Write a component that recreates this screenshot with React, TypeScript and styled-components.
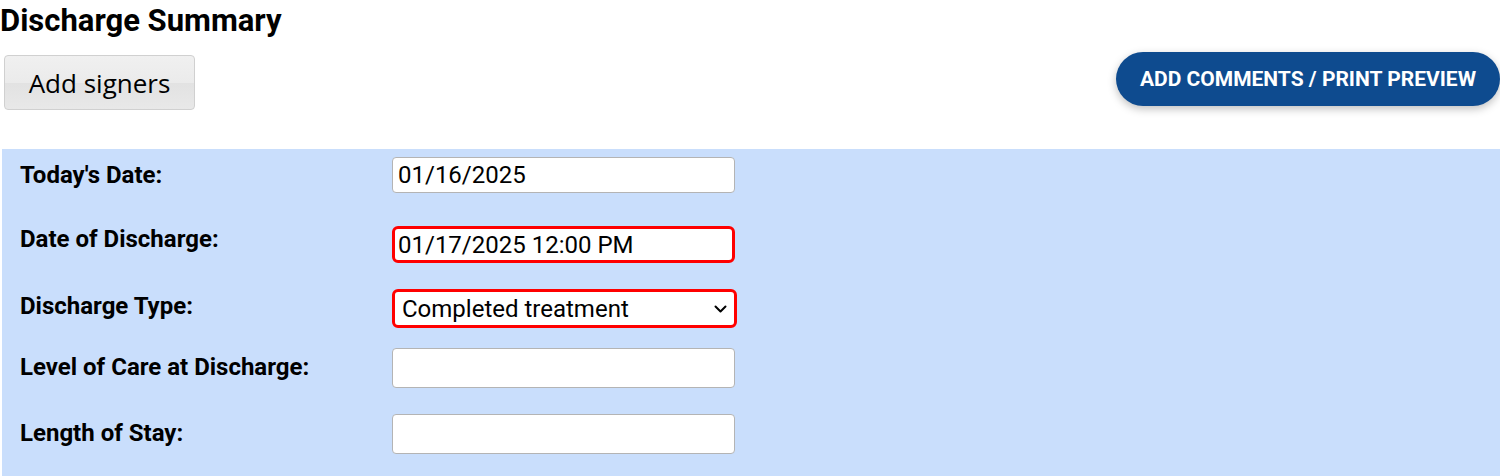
import React from "react";
import styled, { createGlobalStyle } from "styled-components";

const GlobalStyle = createGlobalStyle`
  html, body { margin: 0; padding: 0; background: #ffffff; }
  body { font-family: Roboto, "Liberation Sans", sans-serif; color: #000; }
  * { box-sizing: border-box; }
`;

const Page = styled.div`
  width: 1500px;
  display: flex;
  flex-direction: column;
`;

const Title = styled.h1`
  margin: 0;
  padding: 3px 0 0 0;
  font-family: Roboto, "Liberation Sans", sans-serif;
  font-size: 31px;
  font-weight: 700;
  line-height: 36px;
`;

const Toolbar = styled.div`
  display: flex;
  justify-content: space-between;
  align-items: flex-start;
  margin-top: 13px;
`;

const SignersButton = styled.button`
  margin: 3px 0 0 4px;
  width: 191px;
  height: 55px;
  border: 1px solid #d0d0d0;
  border-radius: 4px;
  background: linear-gradient(to bottom, #f0f0f0 0%, #ebebeb 50%, #e2e2e2 51%, #e8e8e8 100%);
  font-family: "Open Sans", "Noto Sans", sans-serif;
  font-size: 26px;
  color: #000;
  padding: 0;
`;

const PrimaryButton = styled.button`
  width: 384px;
  height: 54px;
  border: none;
  border-radius: 27px;
  background: #0e4b8f;
  color: #fff;
  font-family: Roboto, "Liberation Sans", sans-serif;
  font-weight: 700;
  font-size: 21px;
  text-transform: uppercase;
  box-shadow: 0 3px 8px rgba(0, 0, 0, 0.25);
  padding: 0;
`;

const Panel = styled.div`
  margin: 39px 0 0 2px;
  background: #c9defc;
  padding: 8px 0 22px 18px;
  display: flex;
  flex-direction: column;
`;

const Row = styled.div<{ $top: number }>`
  display: grid;
  grid-template-columns: 372px 343px;
  align-items: center;
  margin-top: ${(p) => p.$top}px;
`;

const Label = styled.label<{ $lift?: number }>`
  font-family: Roboto, "Liberation Sans", sans-serif;
  font-weight: 700;
  font-size: 24px;
  line-height: 28px;
  margin-top: ${(p) => -(p.$lift ?? 0)}px;
  margin-bottom: ${(p) => p.$lift ?? 0}px;
`;

const TextField = styled.input<{ $invalid?: boolean; $h: number }>`
  width: 343px;
  height: ${(p) => p.$h}px;
  border: ${(p) => (p.$invalid ? "3px solid #ff0000" : "1px solid #b4b4b4")};
  border-radius: ${(p) => (p.$invalid ? 6 : 4)}px;
  background: #fff;
  font-family: Roboto, "Liberation Sans", sans-serif;
  font-size: 24px;
  color: #000;
  padding: 0 ${(p) => (p.$invalid ? 3 : 5)}px;
  outline: none;
`;

const SelectWrap = styled.div`
  position: relative;
  width: 345px;
  height: 39px;
`;

const SelectField = styled.select`
  appearance: none;
  -webkit-appearance: none;
  width: 345px;
  height: 39px;
  border: 3px solid #ff0000;
  border-radius: 6px;
  background: #fff;
  font-family: Roboto, "Liberation Sans", sans-serif;
  font-size: 24px;
  color: #000;
  padding: 0 30px 0 7px;
  outline: none;
`;

const Chevron = styled.svg`
  position: absolute;
  right: 10px;
  top: 16px;
  width: 13px;
  height: 8px;
  pointer-events: none;
`;

export default function App() {
  return (
    <Page>
      <GlobalStyle />
      <Title>Discharge Summary</Title>
      <Toolbar>
        <SignersButton>Add signers</SignersButton>
        <PrimaryButton>Add Comments / Print Preview</PrimaryButton>
      </Toolbar>
      <Panel>
        <Row $top={0}>
          <Label>Today's Date:</Label>
          <TextField $h={36} readOnly defaultValue="01/16/2025" />
        </Row>
        <Row $top={33}>
          <Label $lift={6}>Date of Discharge:</Label>
          <TextField $h={37} $invalid readOnly defaultValue="01/17/2025 12:00 PM" />
        </Row>
        <Row $top={26}>
          <Label $lift={3}>Discharge Type:</Label>
          <SelectWrap>
            <SelectField defaultValue="Completed treatment">
              <option>Completed treatment</option>
            </SelectField>
            <Chevron viewBox="0 0 13 8">
              <path d="M1.5 1.5 L6.5 6.5 L11.5 1.5" fill="none" stroke="#000" strokeWidth="2" strokeLinecap="round" strokeLinejoin="round" />
            </Chevron>
          </SelectWrap>
        </Row>
        <Row $top={20}>
          <Label $lift={1}>Level of Care at Discharge:</Label>
          <TextField $h={40} readOnly defaultValue="" />
        </Row>
        <Row $top={26}>
          <Label $lift={1}>Length of Stay:</Label>
          <TextField $h={40} readOnly defaultValue="" />
        </Row>
      </Panel>
    </Page>
  );
}
